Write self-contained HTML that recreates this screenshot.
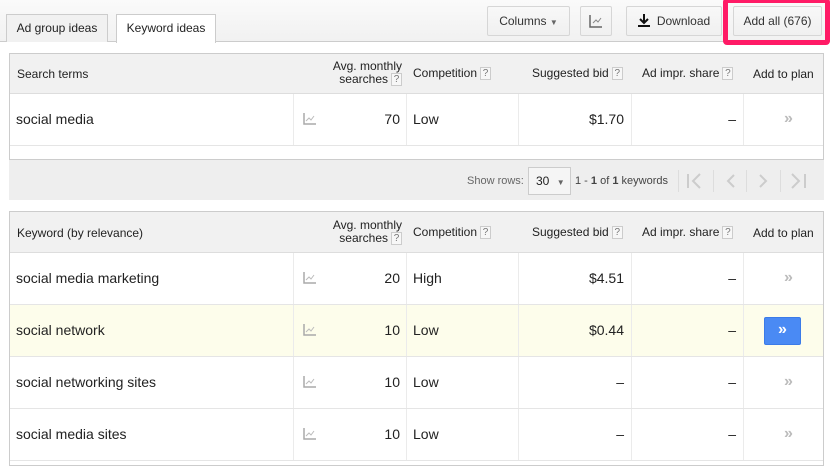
<!DOCTYPE html>
<html><head><meta charset="utf-8"><style>
*{margin:0;padding:0;box-sizing:border-box}
body{width:830px;height:466px;overflow:hidden;background:#fff;font-family:"Liberation Sans",Arial,sans-serif;color:#222;position:relative}
.a{position:absolute}
.top{left:0;top:0;width:830px;height:42px;background:linear-gradient(#fafafa,#f1f1f1);border-bottom:1px solid #ccc}
.tab{top:14px;height:28px;border:1px solid #ccc;border-bottom:none;font-size:12px;line-height:27px;text-align:center}
.btn{top:6px;height:30px;border:1px solid #d6d6d6;border-radius:2px;background:linear-gradient(#f8f8f8,#f0f0f0);font-size:12px;line-height:28px;text-align:center;color:#333}
.tbl{left:9px;width:815px;border:1px solid #ccc}
.hd{background:#f1f1f1;border-bottom:1px solid #ddd}
.h{font-size:12px;color:#222;position:absolute}
.q{display:inline-block;width:11px;height:13px;border:1px solid #ccc;background:#f7f7f7;font-size:10px;line-height:11px;text-align:center;color:#777;vertical-align:middle;margin-left:3px}
.row{position:absolute;left:0;width:813px;height:52px;border-bottom:1px solid #e5e5e5}
.c{position:absolute;top:0;height:51px;border-left:1px solid #ebebeb}
.t{position:absolute;font-size:14px;line-height:51px}
.chart{position:absolute;left:293px;top:19px}
.arr{position:absolute;left:774px;top:16px;color:#bbb;font-size:16px;font-weight:bold}
</style></head><body>
<div class="a top"></div>
<div class="a tab" style="left:116px;width:100px;background:#fff;height:29px">Keyword ideas</div>
<div class="a tab" style="left:6px;width:102px;background:#f1f1f1">Ad group ideas</div>
<div class="a btn" style="left:487px;width:83px">Columns <span style="font-size:8px;color:#666">▼</span></div>
<div class="a btn" style="left:580px;width:32px"><svg width="14" height="14" style="margin-top:7px" viewBox="0 0 14 14"><path d="M1 1V13H13" stroke="#666" stroke-width="1.5" fill="none"/><path d="M4 9L7 6L9 8L12 4" stroke="#888" fill="none"/></svg></div>
<div class="a btn" style="left:626px;width:96px"><svg width="12" height="13" viewBox="0 0 12 13" style="vertical-align:-2px;margin-right:7px"><path d="M6 0V8M2 5L6 9L10 5" stroke="#111" stroke-width="2" fill="none"/><rect x="0" y="11" width="12" height="2" fill="#111"/></svg>Download</div>
<div class="a btn" style="left:733px;width:89px">Add all (676)</div>
<div class="a" style="left:723px;top:-2px;width:107px;height:47px;border:5px solid #ff1a66;border-radius:4px"></div>

<div class="a tbl" style="top:53px;height:107px">
 <div class="a hd" style="left:0;top:0;width:813px;height:40px"></div>
 <div class="h" style="left:7px;top:13px">Search terms</div>
 <div class="h" style="left:318px;top:6px;text-align:right;width:74px;line-height:13px">Avg. monthly<br>searches<span class="q">?</span></div>
 <div class="h" style="left:403px;top:12px">Competition<span class="q">?</span></div>
 <div class="h" style="left:522px;top:12px">Suggested bid<span class="q">?</span></div>
 <div class="h" style="left:632px;top:12px">Ad impr. share<span class="q">?</span></div>
 <div class="h" style="left:743px;top:13px">Add to plan</div>
 <div class="row" style="top:40px">
  <div class="c" style="left:283px"></div><div class="c" style="left:396px"></div><div class="c" style="left:508px"></div><div class="c" style="left:621px"></div><div class="c" style="left:733px"></div>
  <div class="t" style="left:6px">social media</div>
  <svg class="chart" width="13" height="12"><path d="M1 0V11H13" stroke="#aaa" stroke-width="1.5" fill="none"/><path d="M3 8L6 5L8 7L11 3" stroke="#bbb" fill="none"/></svg>
  <div class="t" style="left:340px;width:50px;text-align:right">70</div>
  <div class="t" style="left:403px">Low</div>
  <div class="t" style="left:520px;width:94px;text-align:right">$1.70</div>
  <div class="t" style="left:700px;width:26px;text-align:right">–</div>
  <div class="arr">»</div>
 </div>
</div>
<div class="a" style="left:9px;top:160px;width:815px;height:40px;background:#eee"></div>
<div class="a" style="left:467px;top:175px;font-size:11px;color:#666">Show rows:</div>
<div class="a" style="left:528px;top:167px;width:43px;height:28px;border:1px solid #ccc;background:#f5f5f5;font-size:12px;line-height:26px;padding-left:7px">30 <span style="font-size:8px;color:#666;margin-left:4px">▼</span></div>
<div class="a" style="left:575px;top:175px;font-size:11px;color:#444">1 - <b>1</b> of <b>1</b> keywords</div>
<div class="a" style="left:678px;top:170px;width:1px;height:22px;background:#ddd"></div>
<div class="a" style="left:713px;top:170px;width:1px;height:22px;background:#ddd"></div>
<div class="a" style="left:746px;top:170px;width:1px;height:22px;background:#ddd"></div>
<div class="a" style="left:780px;top:170px;width:1px;height:22px;background:#ddd"></div>
<svg class="a" style="left:686px;top:173px" width="130" height="16"><g stroke="#ccc" stroke-width="2" fill="none"><path d="M2 1V15M14 1L7 8L14 15"/><path d="M48 2L42 8L48 14"/><path d="M74 2L80 8L74 14"/><path d="M106 1L113 8L106 15M119 1V15"/></g></svg>

<div class="a tbl" style="top:211px;height:255px">
 <div class="a hd" style="left:0;top:0;width:813px;height:41px"></div>
 <div class="h" style="left:7px;top:14px">Keyword (by relevance)</div>
 <div class="h" style="left:318px;top:7px;text-align:right;width:74px;line-height:13px">Avg. monthly<br>searches<span class="q">?</span></div>
 <div class="h" style="left:403px;top:13px">Competition<span class="q">?</span></div>
 <div class="h" style="left:522px;top:13px">Suggested bid<span class="q">?</span></div>
 <div class="h" style="left:632px;top:13px">Ad impr. share<span class="q">?</span></div>
 <div class="h" style="left:743px;top:14px">Add to plan</div>

 <div class="row" style="top:41px">
  <div class="c" style="left:283px"></div><div class="c" style="left:396px"></div><div class="c" style="left:508px"></div><div class="c" style="left:621px"></div><div class="c" style="left:733px"></div>
  <div class="t" style="left:6px">social media marketing</div>
  <svg class="chart" width="13" height="12"><path d="M1 0V11H13" stroke="#aaa" stroke-width="1.5" fill="none"/><path d="M3 8L6 5L8 7L11 3" stroke="#bbb" fill="none"/></svg>
  <div class="t" style="left:340px;width:50px;text-align:right">20</div>
  <div class="t" style="left:403px">High</div>
  <div class="t" style="left:520px;width:94px;text-align:right">$4.51</div>
  <div class="t" style="left:700px;width:26px;text-align:right">–</div>
  <div class="arr">»</div>
 </div>
 <div class="row" style="top:93px;background:#fdfdeb">
  <div class="c" style="left:283px"></div><div class="c" style="left:396px"></div><div class="c" style="left:508px"></div><div class="c" style="left:621px"></div><div class="c" style="left:733px"></div>
  <div class="t" style="left:6px">social network</div>
  <svg class="chart" width="13" height="12"><path d="M1 0V11H13" stroke="#aaa" stroke-width="1.5" fill="none"/><path d="M3 8L6 5L8 7L11 3" stroke="#bbb" fill="none"/></svg>
  <div class="t" style="left:340px;width:50px;text-align:right">10</div>
  <div class="t" style="left:403px">Low</div>
  <div class="t" style="left:520px;width:94px;text-align:right">$0.44</div>
  <div class="t" style="left:700px;width:26px;text-align:right">–</div>
  <div class="a" style="left:754px;top:12px;width:37px;height:28px;background:#4a8af4;border:1px solid #3b7be8;border-radius:2px;color:#fff;font-weight:bold;font-size:16px;text-align:center;line-height:24px">»</div>
 </div>
 <div class="row" style="top:145px">
  <div class="c" style="left:283px"></div><div class="c" style="left:396px"></div><div class="c" style="left:508px"></div><div class="c" style="left:621px"></div><div class="c" style="left:733px"></div>
  <div class="t" style="left:6px">social networking sites</div>
  <svg class="chart" width="13" height="12"><path d="M1 0V11H13" stroke="#aaa" stroke-width="1.5" fill="none"/><path d="M3 8L6 5L8 7L11 3" stroke="#bbb" fill="none"/></svg>
  <div class="t" style="left:340px;width:50px;text-align:right">10</div>
  <div class="t" style="left:403px">Low</div>
  <div class="t" style="left:520px;width:94px;text-align:right">–</div>
  <div class="t" style="left:700px;width:26px;text-align:right">–</div>
  <div class="arr">»</div>
 </div>
 <div class="row" style="top:197px">
  <div class="c" style="left:283px"></div><div class="c" style="left:396px"></div><div class="c" style="left:508px"></div><div class="c" style="left:621px"></div><div class="c" style="left:733px"></div>
  <div class="t" style="left:6px">social media sites</div>
  <svg class="chart" width="13" height="12"><path d="M1 0V11H13" stroke="#aaa" stroke-width="1.5" fill="none"/><path d="M3 8L6 5L8 7L11 3" stroke="#bbb" fill="none"/></svg>
  <div class="t" style="left:340px;width:50px;text-align:right">10</div>
  <div class="t" style="left:403px">Low</div>
  <div class="t" style="left:520px;width:94px;text-align:right">–</div>
  <div class="t" style="left:700px;width:26px;text-align:right">–</div>
  <div class="arr">»</div>
 </div>
</div>
</body></html>
